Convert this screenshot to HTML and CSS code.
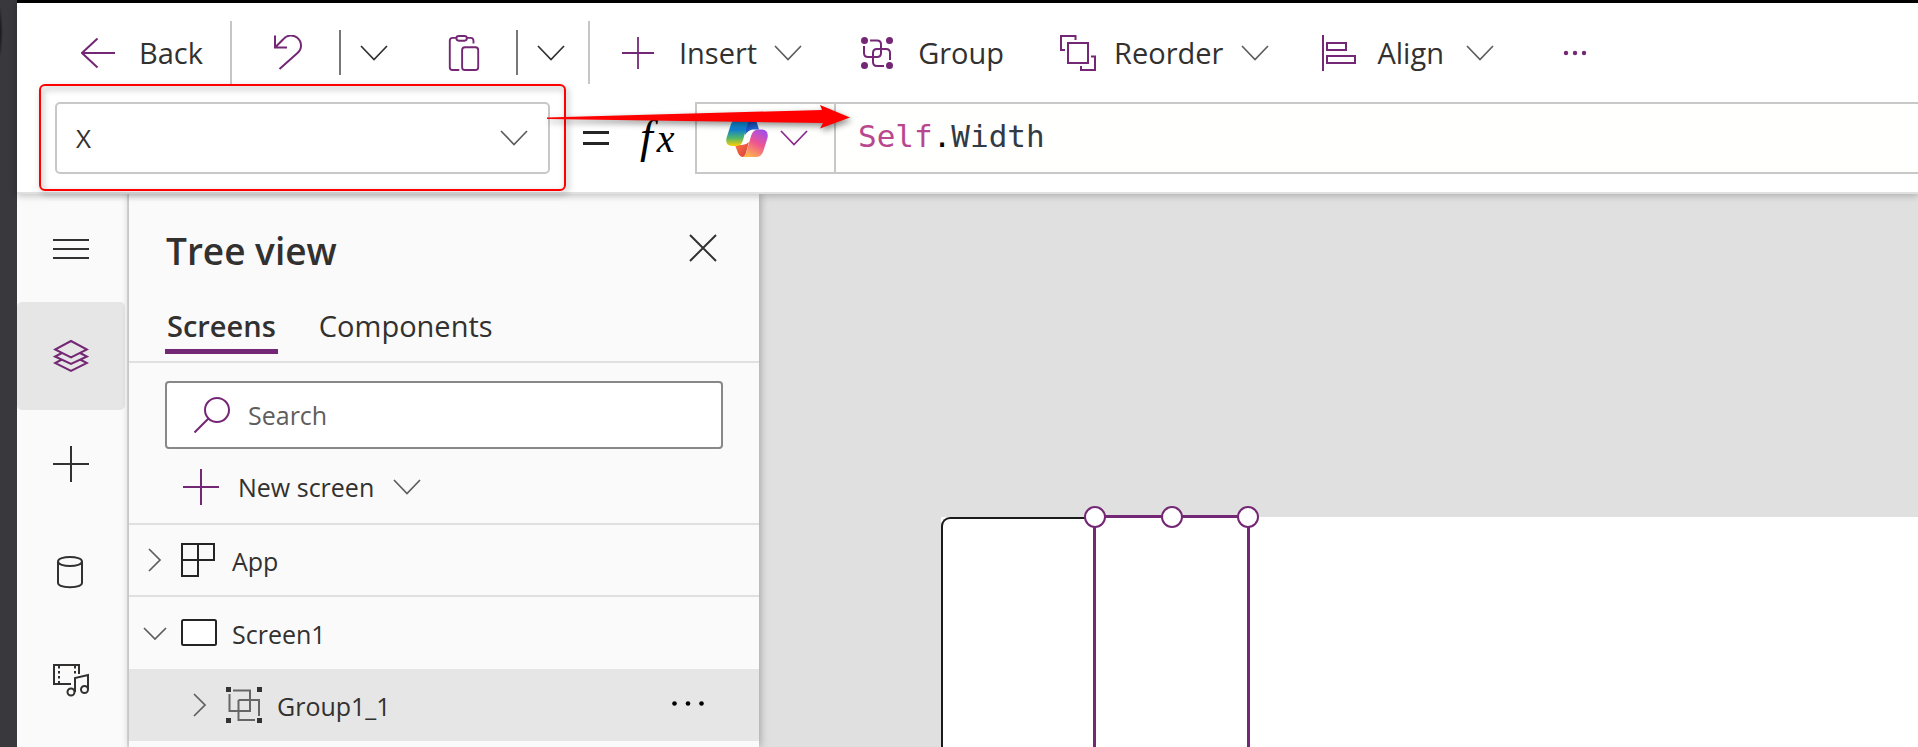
FILE: index.html
```html
<!DOCTYPE html>
<html lang="en">
<head>
<meta charset="utf-8">
<title>Power Apps Studio</title>
<link rel="stylesheet" href="styles.css">
</head>
<body>
<svg class="defs" aria-hidden="true">
  <symbol id="chevron" viewBox="0 0 28 16"><path d="M1 1 14 14.500 27 1" fill="none" stroke="currentColor" stroke-width="1.700"/></symbol>
  <symbol id="plus" viewBox="0 0 36 36"><path d="M18 0V36M0 18H36" fill="none" stroke="currentColor" stroke-width="2"/></symbol>
</svg>
<div class="app">
  <div class="edge"></div>
  <div class="studio">
    <header class="top">
      <div class="toolbar" role="toolbar" aria-label="Commands">
        <button class="tool back"><svg class="i34" viewBox="0 0 34 36"><path d="M34 18H1M16.500 3.500 1 18l15.500 14.500" fill="none" stroke="currentColor" stroke-width="2"/></svg><span>Back</span></button>
        <span class="rule"></span>
        <button class="tool undo" aria-label="Undo"><svg class="i34" viewBox="0 0 34 36"><path d="M4 .500V12.500H16M4 12.500 12 4.500C16-.500 22-.300 26 2.500C31.500 7 31 14 26.500 18L8.500 34" fill="none" stroke="currentColor" stroke-width="2"/></svg></button>
        <span class="rule short"></span>
        <button class="tool drop" aria-label="Undo options"><svg class="chev"><use href="#chevron"/></svg></button>
        <button class="tool paste" aria-label="Paste"><svg class="i34" viewBox="0 0 34 38"><g fill="none" stroke="currentColor" stroke-width="2"><path d="M9 3H5Q2 3 2 6V34Q2 37 5 37H12M20 3H24Q27 3 27 6V9"/><rect x="9" y="1" width="11" height="5" rx="2.500"/><rect x="15" y="13" width="17" height="24" rx="3"/></g></svg></button>
        <span class="rule short"></span>
        <button class="tool drop second" aria-label="Paste options"><svg class="chev"><use href="#chevron"/></svg></button>
        <span class="rule"></span>
        <button class="tool insert"><svg class="i32"><use href="#plus"/></svg><span>Insert</span><svg class="chev soft"><use href="#chevron"/></svg></button>
        <button class="tool group"><svg class="i34" viewBox="0 0 34 34"><g fill="none" stroke="currentColor" stroke-width="2"><path d="M10 4.500H17Q21 4.500 21 8.500V17Q21 21 17 21H8Q4 21 4 17V10M24 30H17Q13 30 13 26V17Q13 13 17 13H26Q30 13 30 17V24"/></g><g fill="currentColor"><circle cx="4.500" cy="4.500" r="3.500"/><circle cx="29.500" cy="4.500" r="3.500"/><circle cx="4.500" cy="29.500" r="3.500"/><circle cx="29.500" cy="29.500" r="3.500"/></g></svg><span>Group</span></button>
        <button class="tool reorder"><svg class="i36" viewBox="0 0 36 36"><path d="M5 15H1V1H15.500V5M8 8H28V28H8ZM31 21.500H35V35H21V31" fill="none" stroke="currentColor" stroke-width="2"/></svg><span>Reorder</span><svg class="chev soft"><use href="#chevron"/></svg></button>
        <button class="tool align"><svg class="i36" viewBox="0 0 36 36"><path d="M2 0V36M6 8H25V15H6ZM6 21H34V28H6Z" fill="none" stroke="currentColor" stroke-width="2"/></svg><span>Align</span><svg class="chev soft"><use href="#chevron"/></svg></button>
        <button class="tool more" aria-label="More commands"><svg class="dots" viewBox="0 0 24 6"><g fill="currentColor"><circle cx="3" cy="3" r="2.200"/><circle cx="12" cy="3" r="2.200"/><circle cx="21" cy="3" r="2.200"/></g></svg></button>
      </div>
      <div class="formula-row">
        <div class="property">
          <select aria-label="Property"><option>X</option></select>
          <svg class="chev soft"><use href="#chevron"/></svg>
        </div>
        <svg class="equals" viewBox="0 0 26 16" role="img" aria-label="equals"><path d="M0 2.500H26M0 13.500H26" stroke="#242424" stroke-width="3"/></svg>
        <div class="fx"><span class="fx-f">f</span><span class="fx-x">x</span></div>
        <div class="formula">
          <button class="copilot" aria-label="Copilot">
            <svg class="copilot-logo" viewBox="0 0 42 40">
              <defs>
                <linearGradient id="ga" x1="0" y1="0" x2="0" y2="1"><stop offset="0" stop-color="#0fa0e8"/><stop offset=".400" stop-color="#1280cf"/><stop offset=".700" stop-color="#4fb56a"/><stop offset="1" stop-color="#ffd000"/></linearGradient>
                <linearGradient id="gb" x1=".800" y1="0" x2=".300" y2="1"><stop offset="0" stop-color="#a04ef0"/><stop offset=".500" stop-color="#ee5590"/><stop offset="1" stop-color="#ffb24d"/></linearGradient>
                <linearGradient id="gc" x1="0" y1="0" x2="1" y2="1"><stop offset="0" stop-color="#1746b8"/><stop offset="1" stop-color="#2a78e8"/></linearGradient>
                <linearGradient id="gd" x1="0" y1="0" x2="1" y2="1"><stop offset="0" stop-color="#ff7a45"/><stop offset="1" stop-color="#d83a3a"/></linearGradient>
              </defs>
              <path d="M20 1H26Q30 1 31 5L33 11.500H27Q22 12 19 17Z" fill="url(#gc)"/>
              <path d="M9 27H16Q20 27 23 24L20 35Q18.500 39 17 39Q14 39 12 35Z" fill="url(#gd)"/>
              <path d="M12 1H25Q22 3 21 8L17 22Q15.500 28 10 28H6Q-1 28 .500 20L5 6Q7 1 12 1Z" fill="url(#ga)"/>
              <path d="M30 39H17Q20 37 21 32L25 18Q27 11.500 32 11.500H36Q43 12 41.500 20L37 34Q35 39 30 39Z" fill="url(#gb)"/>
            </svg>
            <svg class="chev orchid"><use href="#chevron"/></svg>
          </button>
          <div class="code" role="textbox" aria-label="Formula" contenteditable="true" spellcheck="false"><span class="kw">Self</span><span class="dot">.</span>Width</div>
        </div>
      </div>
      <div class="callout"></div>
      <svg class="arrow" viewBox="0 0 304 26"><path d="M0 12.500 275 5 273 0 303 12.500 273 23.500 276 18 0 14Z" fill="#f00"/></svg>
    </header>
    <div class="body">
      <nav class="rail" aria-label="Panels">
        <button aria-label="Menu"><svg class="i36" viewBox="0 0 36 36"><path d="M0 10H36M0 19H36M0 28H36" stroke="currentColor" stroke-width="2"/></svg></button>
        <button class="active" aria-label="Tree view"><svg class="i36" viewBox="0 0 36 36"><path d="M18 3 34 11.500 18 19.500 2 11.500ZM9 15 2 18.500 18 26 34 18.500 27 15M9 21.500 2 25 18 33 34 25 27 21.500" fill="none" stroke="currentColor" stroke-width="2"/></svg></button>
        <button aria-label="Insert"><svg class="i36"><use href="#plus"/></svg></button>
        <button aria-label="Data"><svg class="i36" viewBox="0 0 36 36"><path d="M5 7.500C5 1.500 29 1.500 29 7.500C29 13.500 5 13.500 5 7.500V29C5 34.500 29 34.500 29 29V7.500" fill="none" stroke="currentColor" stroke-width="2"/></svg></button>
        <button aria-label="Media"><svg class="i36" viewBox="0 0 36 36"><path d="M18 22H1V3H26V12M22 30V16L35 13V27" fill="none" stroke="currentColor" stroke-width="2"/><path d="M6 4V22M22 4V13" stroke="currentColor" stroke-width="2" stroke-dasharray="2.500 2.500"/><g fill="none" stroke="currentColor" stroke-width="2"><circle cx="18" cy="30" r="3.500"/><circle cx="31.500" cy="27.500" r="3.500"/></g></svg></button>
      </nav>
      <aside class="panel">
        <div class="panel-head">
          <h1>Tree view</h1>
          <button aria-label="Close"><svg class="i28" viewBox="0 0 28 28"><path d="M1 1 27 27M27 1 1 27" stroke="currentColor" stroke-width="2"/></svg></button>
        </div>
        <div class="tabs" role="tablist">
          <button class="tab selected" role="tab" aria-selected="true">Screens</button>
          <button class="tab" role="tab" aria-selected="false">Components</button>
        </div>
        <label class="search">
          <svg class="i36" viewBox="0 0 36 36"><circle cx="23" cy="13" r="12" fill="none" stroke="currentColor" stroke-width="2"/><path d="M15 21 .500 35.500" stroke="currentColor" stroke-width="2"/></svg>
          <input type="search" placeholder="Search" aria-label="Search">
        </label>
        <button class="new-screen"><svg class="i36 violet"><use href="#plus"/></svg><span>New screen</span><svg class="chev soft"><use href="#chevron"/></svg></button>
        <div class="tree" role="tree">
          <div class="node ruled" role="treeitem"><svg class="twist" viewBox="0 0 24 24"><path d="M6 1 17 12 6 23" fill="none" stroke="currentColor" stroke-width="1.700"/></svg><svg class="i36 dark" viewBox="0 0 36 36"><path d="M1 2H33V18H1ZM17 2V34H1V18" fill="none" stroke="currentColor" stroke-width="2"/></svg><span>App</span></div>
          <div class="node" role="treeitem"><svg class="twist" viewBox="0 0 24 24"><path d="M1 7 12 18 23 7" fill="none" stroke="currentColor" stroke-width="1.700"/></svg><svg class="i36 dark" viewBox="0 0 36 36"><rect x="1" y="5" width="34" height="25" rx="1.500" fill="#fff" stroke="currentColor" stroke-width="2"/></svg><span>Screen1</span></div>
          <div class="node child" role="treeitem" aria-selected="true"><svg class="twist" viewBox="0 0 24 24"><path d="M6 1 17 12 6 23" fill="none" stroke="currentColor" stroke-width="1.700"/></svg><svg class="i36" viewBox="0 0 36 36"><path d="M7 3.500H24V24H3.500V7M12.500 13H33V29M29 33H12.500V13" fill="none" stroke="#666" stroke-width="2"/><path d="M0 0H5V5H0ZM31 0H36V5H31ZM0 31H5V36H0ZM31 31H36V36H31Z" fill="#333"/></svg><span>Group1_1</span><button aria-label="More actions"><svg class="dots-wide" viewBox="0 0 32 8"><circle cx="2.500" cy="2.500" r="2.300"/><circle cx="16" cy="2.500" r="2.300"/><circle cx="29.500" cy="2.500" r="2.300"/></svg></button></div>
        </div>
      </aside>
      <main class="canvas">
        <div class="artboard">
          <div class="outline"></div>
          <div class="selection"><i class="handle"></i><i class="handle"></i><i class="handle"></i></div>
        </div>
      </main>
    </div>
  </div>
</div>
</body>
</html>
```
FILE: styles.css
```css
* { box-sizing: border-box; }
html, body { height: 100%; }
body {
  margin: 0;
  overflow: hidden;
  color: #323130;
  background: #fafafa;
  font: 29px/40px "Open Sans", "Noto Sans", sans-serif;
}
button {
  display: flex;
  align-items: center;
  padding: 0;
  border: 0;
  background: none;
  color: inherit;
  font: inherit;
}
svg { display: block; flex: none; }
.defs { position: absolute; width: 0; height: 0; }
.app { display: flex; height: 100%; }
.edge {
  flex: none;
  width: 17px;
  background: radial-gradient(ellipse 6px 32px at -3px 32px, #111 40%, transparent), #38383d;
}
.studio { flex: 1; min-width: 0; display: flex; flex-direction: column; }

.i28 { width: 28px; height: 28px; }
.i32 { width: 32px; height: 32px; }
.i34 { width: 34px; height: 36px; }
.i36 { width: 36px; height: 36px; }
.chev { width: 28px; height: 16px; color: #323130; }
.soft { color: #605e5c; }
.violet { color: #742774; }
.orchid { color: #8a2a8e; }
.dark { color: #242424; }
.dots { width: 24px; height: 6px; }
.dots-wide { width: 32px; height: 8px; }

.top {
  position: relative;
  z-index: 2;
  flex: none;
  border-top: 3px solid #000;
  border-bottom: 2px solid #e0e0e0;
  background: #fff;
  box-shadow: 0 2px 7px rgba(0, 0, 0, .22);
}
.toolbar { display: flex; align-items: center; height: 99px; padding-left: 64px; }
.tool { height: 99px; color: #742774; }
.tool span { color: #323130; }
.rule { width: 2px; height: 63px; background: #c8c6c4; }
.rule.short { height: 45px; background: #797775; }
.back { gap: 24px; padding-right: 27px; }
.undo { padding: 0 34px 0 39px; }
.drop { padding: 0 59px 0 19px; }
.drop.second { padding-right: 23px; }
.paste { padding-right: 35px; }
.insert { padding: 0 58px 0 32px; }
.insert span { margin: 0 17px 0 25px; }
.group { gap: 24px; padding-right: 56px; }
.reorder span { margin: 0 18px; }
.reorder { padding-right: 52px; }
.align span { margin: 0 22px 0 20px; }
.align { padding-right: 69px; }

.formula-row { display: flex; align-items: center; height: 72px; margin-bottom: 18px; padding-left: 38px; }
.property { position: relative; width: 495px; height: 72px; }
.property select {
  width: 100%;
  height: 100%;
  padding: 0 19px;
  border: 2px solid #c8c8c8;
  border-radius: 5px;
  appearance: none;
  background: #fff;
  color: #323130;
  font: 26px/40px "Open Sans", sans-serif;
}
.property .chev { position: absolute; right: 22px; top: 28px; pointer-events: none; }
.equals { width: 26px; height: 16px; margin: 0 25px 0 33px; }
.fx {
  width: 61px;
  color: #000;
  font: italic 40px/40px "Liberation Serif", serif;
  white-space: nowrap;
}
.fx-f { margin: 0 4px 0 6px; font-size: 46px; }
.formula {
  flex: 1;
  display: flex;
  height: 72px;
  border: 2px solid #c8c8c8;
  border-right: 0;
  background: #fffffd;
}
.copilot { width: 139px; gap: 12px; padding-left: 29px; border-right: 2px solid #c8c8c8; }
.copilot-logo { width: 42px; height: 40px; }
.code { flex: 1; padding: 12px 22px; color: #323a45; font: 31px/40px "DejaVu Sans Mono", monospace; }
.kw { color: #b9478f; }
.dot { color: #000; }
.callout {
  position: absolute;
  left: 22px;
  top: 81px;
  width: 527px;
  height: 107px;
  border: 2px solid #f00;
  border-radius: 6px;
  filter: drop-shadow(2px 3px 3px rgba(0, 0, 0, .4));
  pointer-events: none;
}
.arrow {
  position: absolute;
  left: 530px;
  top: 102px;
  width: 304px;
  height: 26px;
  filter: drop-shadow(2px 3px 3px rgba(0, 0, 0, .45));
  pointer-events: none;
}

.body { flex: 1; display: flex; min-height: 0; }
.rail { flex: none; width: 112px; border-right: 2px solid #e0e0e0; background: #fafafa; }
.rail button { justify-content: center; width: 108px; height: 108px; border-radius: 5px; }
.rail .active { background: #e6e6e6; color: #742774; }

.panel {
  position: relative;
  z-index: 1;
  flex: none;
  width: 630px;
  background: #fafafa;
  box-shadow: 1px 0 8px rgba(0, 0, 0, .3);
}
.panel-head { display: flex; align-items: center; justify-content: space-between; height: 108px; padding: 0 42px 0 37px; }
h1 { margin: 0; padding-top: 6px; font-size: 37px; line-height: 48px; font-weight: 600; }
.tabs { display: flex; gap: 39px; height: 61px; padding-left: 36px; border-bottom: 2px solid #e0e0e0; }
.tab { height: 52px; padding: 0 2px; border-bottom: 5px solid transparent; }
.selected { border-color: #742774; font-weight: 600; }
.search {
  display: flex;
  align-items: center;
  gap: 18px;
  height: 68px;
  margin: 18px 36px 0;
  padding-left: 27px;
  border: 2px solid #8a8886;
  border-radius: 4px;
  background: #fff;
  color: #742774;
}
.search input { flex: 1; min-width: 0; padding: 0; border: 0; outline: 0; background: none; font: 25px/40px "Open Sans", sans-serif; }
.search input::placeholder { color: #605e5c; }
.new-screen { width: 100%; height: 76px; padding: 2px 0 0 54px; border-bottom: 2px solid #e0e0e0; font-size: 25px; }
.new-screen span { margin: 0 19px; }
.tree { font-size: 25px; }
.node { display: flex; align-items: center; height: 72px; padding-left: 14px; }
.node.ruled { border-bottom: 2px solid #e0e0e0; }
.twist { width: 24px; height: 24px; margin-right: 14px; color: #605e5c; }
.node > span { margin-left: 15px; padding-top: 2px; }
.child { padding: 0 55px 0 59px; background: #e6e6e6; }
.child button { height: 40px; margin-left: auto; }

.canvas { flex: 1; min-width: 0; padding: 323px 0 0 182px; background: #e0e0e0; }
.artboard { position: relative; height: 100%; background: #fff; }
.outline {
  position: absolute;
  left: 0;
  top: 0;
  width: 160px;
  height: 100%;
  border: solid #1a1a1a;
  border-width: 2px 0 0 2px;
  border-radius: 9px 0 0 0;
}
.selection {
  position: absolute;
  left: 152px;
  top: -2px;
  bottom: 0;
  display: flex;
  justify-content: space-between;
  width: 157px;
  border: 3px solid #742774;
  border-bottom: 0;
}
.handle {
  flex: none;
  width: 22px;
  height: 22px;
  margin: -12px;
  border: 2px solid #742774;
  border-radius: 50%;
  background: #fff;
}
```
